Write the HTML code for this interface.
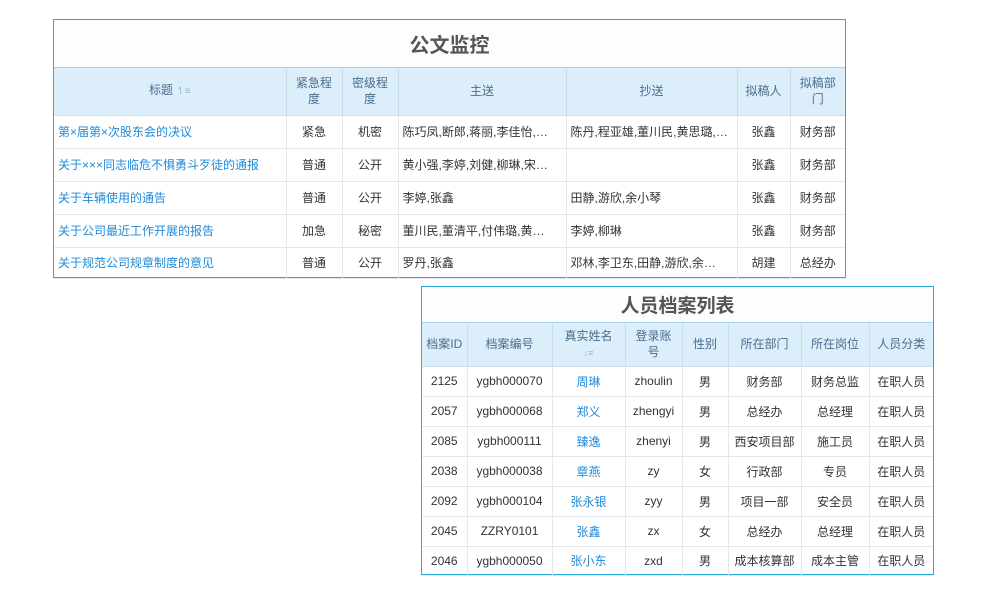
<!DOCTYPE html>
<html><head><meta charset="utf-8"><style>
body{margin:0;background:#fff;width:1000px;height:600px;position:relative;overflow:hidden;font-family:"Liberation Sans","Noto Sans CJK SC",sans-serif;}
.box{position:absolute;border:1px solid #29a8e0;background:#fff;box-sizing:border-box;}
table{border-collapse:collapse;table-layout:fixed;width:100%;}
td,th{border:1px solid #e4e8ec;text-align:center;font-size:12px;color:#333;padding:0;overflow:hidden;white-space:nowrap;}
th{background:#ddeefb;color:#4a6e8c;font-weight:normal;border-color:#c9dff0;white-space:normal;line-height:16px;}
th.w{padding:0 6px;}
.t{font-weight:bold;color:#555;font-size:20px;border:none;border-bottom:1px solid #a9d3f0;background:#fcfdfd;}
.l{text-align:left;padding-left:4px;text-overflow:ellipsis;}
.a{color:#1f8ad9;}
tr>*:first-child{border-left:none}tr>*:last-child{border-right:none}
</style></head><body>
<div class="box" style="left:53px;top:19px;width:793px;height:259px;">
<table>
<colgroup><col style="width:232px"><col style="width:56px"><col style="width:56px"><col style="width:168px"><col style="width:171px"><col style="width:53px"><col></colgroup>
<tr style="height:47px"><td colspan="7" class="t">公文监控</td></tr>
<tr style="height:48px"><th>标题 <span style="color:#9bb;font-size:10px">↿≡</span></th><th class="w">紧急程度</th><th class="w">密级程度</th><th>主送</th><th>抄送</th><th>拟稿人</th><th class="w">拟稿部门</th></tr>
<tr style="height:33px"><td class="l a">第×届第×次股东会的决议</td><td>紧急</td><td>机密</td><td class="l">陈巧凤,断郎,蒋丽,李佳怡,…</td><td class="l">陈丹,程亚雄,董川民,黄思璐,…</td><td>张鑫</td><td>财务部</td></tr>
<tr style="height:33px"><td class="l a">关于×××同志临危不惧勇斗歹徒的通报</td><td>普通</td><td>公开</td><td class="l">黄小强,李婷,刘健,柳琳,宋…</td><td></td><td>张鑫</td><td>财务部</td></tr>
<tr style="height:33px"><td class="l a">关于车辆使用的通告</td><td>普通</td><td>公开</td><td class="l">李婷,张鑫</td><td class="l">田静,游欣,余小琴</td><td>张鑫</td><td>财务部</td></tr>
<tr style="height:33px"><td class="l a">关于公司最近工作开展的报告</td><td>加急</td><td>秘密</td><td class="l">董川民,董清平,付伟璐,黄…</td><td class="l">李婷,柳琳</td><td>张鑫</td><td>财务部</td></tr>
<tr style="height:31px"><td class="l a">关于规范公司规章制度的意见</td><td>普通</td><td>公开</td><td class="l">罗丹,张鑫</td><td class="l">邓林,李卫东,田静,游欣,余…</td><td>胡建</td><td>总经办</td></tr>
</table></div>
<div class="box" style="left:421px;top:286px;width:513px;height:289px;">
<table>
<colgroup><col style="width:45px"><col style="width:85px"><col style="width:73px"><col style="width:57px"><col style="width:46px"><col style="width:73px"><col style="width:68px"><col></colgroup>
<tr style="height:35px"><td colspan="8" class="t" style="font-size:19px">人员档案列表</td></tr>
<tr style="height:44px"><th>档案ID</th><th>档案编号</th><th>真实姓名<br><span style="font-size:9px;color:#9bb">↓≡</span></th><th class="w">登录账号</th><th>性别</th><th>所在部门</th><th>所在岗位</th><th>人员分类</th></tr>
<tr style="height:30px"><td>2125</td><td>ygbh000070</td><td class="a">周琳</td><td>zhoulin</td><td>男</td><td>财务部</td><td>财务总监</td><td>在职人员</td></tr>
<tr style="height:30px"><td>2057</td><td>ygbh000068</td><td class="a">郑义</td><td>zhengyi</td><td>男</td><td>总经办</td><td>总经理</td><td>在职人员</td></tr>
<tr style="height:30px"><td>2085</td><td>ygbh000111</td><td class="a">臻逸</td><td>zhenyi</td><td>男</td><td>西安项目部</td><td>施工员</td><td>在职人员</td></tr>
<tr style="height:30px"><td>2038</td><td>ygbh000038</td><td class="a">章燕</td><td>zy</td><td>女</td><td>行政部</td><td>专员</td><td>在职人员</td></tr>
<tr style="height:30px"><td>2092</td><td>ygbh000104</td><td class="a">张永银</td><td>zyy</td><td>男</td><td>项目一部</td><td>安全员</td><td>在职人员</td></tr>
<tr style="height:30px"><td>2045</td><td>ZZRY0101</td><td class="a">张鑫</td><td>zx</td><td>女</td><td>总经办</td><td>总经理</td><td>在职人员</td></tr>
<tr style="height:29px"><td>2046</td><td>ygbh000050</td><td class="a">张小东</td><td>zxd</td><td>男</td><td>成本核算部</td><td>成本主管</td><td>在职人员</td></tr>
</table></div>
</body></html>
